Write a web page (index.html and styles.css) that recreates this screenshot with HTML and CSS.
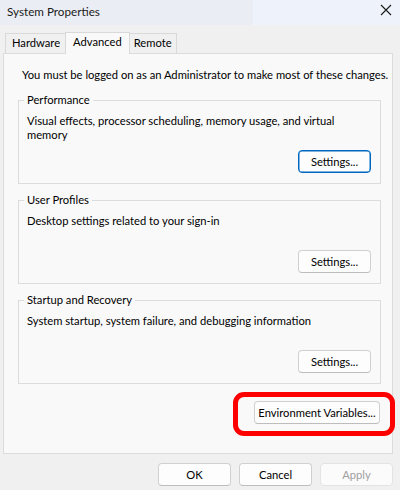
FILE: index.html
```html
<!DOCTYPE html>
<html lang="en">
<head>
    <meta charset="UTF-8">
    <meta name="viewport" content="width=device-width, initial-scale=1.0">
    <title>System Properties</title>
    <link rel="stylesheet" href="styles.css">
</head>
<body>

<div class="window">
    <div class="titlebar">
        <span class="title">System Properties</span>
        <span class="close">
            <svg width="12" height="12" viewBox="0 0 12 12">
                <path d="M1 1 L11 11 M11 1 L1 11" stroke="#1a1a1a" stroke-width="1.1" fill="none"/>
            </svg>
        </span>
    </div>

    <div class="content">
        <div class="tabs">
            <div class="tab">Hardware</div>
            <div class="tab active">Advanced</div>
            <div class="tab">Remote</div>
        </div>

        <div class="panel">
            <p class="note">You must be logged on as an Administrator to make most of these changes.</p>

            <div class="group">
                <span class="group-title">Performance</span>
                <p class="group-text">Visual effects, processor scheduling, memory usage, and virtual memory</p>
                <button class="btn focused">Settings...</button>
            </div>

            <div class="group">
                <span class="group-title">User Profiles</span>
                <p class="group-text">Desktop settings related to your sign-in</p>
                <button class="btn">Settings...</button>
            </div>

            <div class="group">
                <span class="group-title">Startup and Recovery</span>
                <p class="group-text">System startup, system failure, and debugging information</p>
                <button class="btn">Settings...</button>
            </div>

            <div class="env-row">
                <span class="highlight">
                    <button class="btn env">Environment Variables...</button>
                </span>
            </div>
        </div>

        <div class="actions">
            <button class="btn">OK</button>
            <button class="btn">Cancel</button>
            <button class="btn" disabled>Apply</button>
        </div>
    </div>
</div>

</body>
</html>
```

FILE: styles.css
```css
* {
    margin: 0;
    padding: 0;
    box-sizing: border-box;
    font-family: Lato, "Liberation Sans", sans-serif;
}

body {
    width: 400px;
    height: 490px;
    background: #f0f0f0;
    color: #000;
    font-size: 11.2px;
    overflow: hidden;
}

.titlebar {
    height: 25px;
    display: flex;
    align-items: center;
    justify-content: space-between;
    padding: 0 8px 0 7px;
    background: linear-gradient(to right, #eaeef4 0, #eaeef4 253px, #eef2fa 253px);
}

.title {
    font-size: 11.7px;
    line-height: 14px;
    margin-top: -3px;
    color: #1a1a1a;
}

.close {
    display: flex;
    margin-top: -6px;
}

.content {
    padding: 7px 7px 0 3px;
}

/* tab strip */
.tabs {
    display: flex;
    align-items: flex-end;
    height: 21px;
    padding-left: 2px;
}

.tab {
    height: 20px;
    padding: 0 5px 0 6px;
    line-height: 18px;
    border: 1px solid #d9d9d9;
    border-bottom: none;
    background: #f0f0f0;
    margin-left: -1px;
}

.tab:first-child {
    margin-left: 0;
}

.tab:last-child {
    padding: 0 4px;
}

.tab.active {
    height: 22px;
    margin-bottom: -1px;
    background: #f9f9f9;
    line-height: 17px;
    padding: 0 7px;
    position: relative;
    z-index: 1;
}

.panel {
    height: 401px;
    background: #f9f9f9;
    border: 1px solid #dcdcdc;
    padding: 14px 11px 0 14px;
}

.note {
    line-height: 14px;
    margin: 0 0 18px 4px;
    white-space: nowrap;
}

/* group boxes */
.group {
    height: 84px;
    border: 1px solid #dcdcdc;
    padding: 0 9px 10px 8px;
    display: flex;
    flex-direction: column;
    margin-bottom: 16px;
}

.group-title {
    align-self: flex-start;
    line-height: 14px;
    margin: -8px 0 0 -3px;
    padding: 0 3px;
    background: #f9f9f9;
}

.group-text {
    flex: 1;
    line-height: 14px;
    margin-top: 7px;
    padding-right: 20px;
}

.group .btn {
    align-self: flex-end;
}

.btn {
    width: 73px;
    height: 23px;
    font-size: 11.2px;
    color: #000;
    white-space: nowrap;
    background: #fdfdfd;
    border: 1px solid #d0d0d0;
    border-bottom-color: #bdbdbd;
    border-radius: 4px;
}

.btn.focused {
    border: 1px solid #0067c0;
    box-shadow: inset 0 0 0 0.5px #0067c0;
}

.btn:disabled {
    color: #a0a0a0;
    background: #fbfbfb;
    border-color: #e3e3e3;
}

.env-row {
    display: flex;
    justify-content: flex-end;
    padding: 1px 1px 0 0;
}

.highlight {
    position: relative;
    display: flex;
}

/* red marker drawn round the button */
.highlight::after {
    content: "";
    position: absolute;
    top: -9px;
    bottom: -12px;
    left: -21px;
    right: -15px;
    border: 5px solid #ff0000;
    border-radius: 11px;
}

.btn.env {
    width: 126px;
}

.actions {
    display: flex;
    justify-content: flex-end;
    gap: 8px;
    margin-top: 9px;
}
```
